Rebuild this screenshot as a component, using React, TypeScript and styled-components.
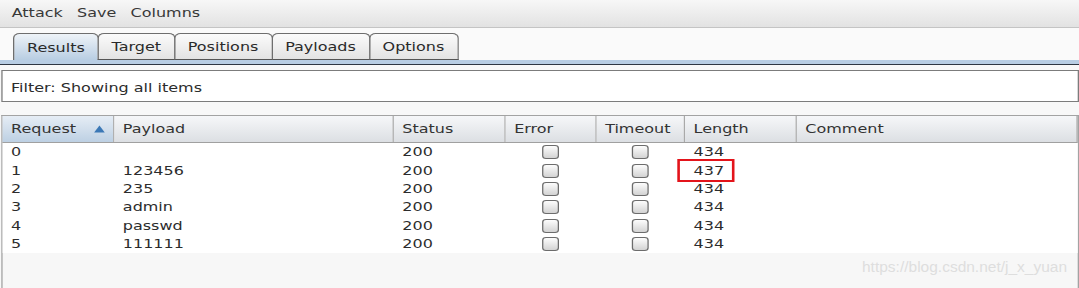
import React from "react";
import styled, { createGlobalStyle } from "styled-components";

/* The reference capture is horizontally stretched by ~1.3; the UI is laid out
   at its native width and the frame is scaled horizontally. */
const SCALE = 1.3;
const BASE_W = 1079 / SCALE;
const COLS = "86px 215px 86px 70px 68px 86px 1fr";

const GlobalStyle = createGlobalStyle`
  html, body { margin: 0; padding: 0; background: #f8f8f8; }
  body { font-family: "DejaVu Sans", "Liberation Sans", sans-serif; }
  * { box-sizing: border-box; }
`;

const Viewport = styled.div`
  position: relative;
  width: 1079px;
  height: 288px;
  overflow: hidden;
  background: #f8f8f8;
`;

const Frame = styled.div`
  width: ${BASE_W}px;
  height: 288px;
  display: flex;
  flex-direction: column;
  transform: scaleX(${SCALE});
  transform-origin: 0 0;
  font-size: 12.3px;
  color: #2c2c2c;
`;

const MenuBar = styled.div`
  flex: none;
  height: 28px;
  display: flex;
  align-items: center;
  gap: 11px;
  padding: 0 9px 1px;
  background: linear-gradient(#f7f7f7, #e2e2e2);
  border-bottom: 1px solid #c4c4c4;
  color: #383838;
`;

const TabStrip = styled.div`
  flex: none;
  height: 32px;
  display: flex;
  align-items: flex-end;
  padding: 5px 0 0 10px;
  background: #fafafa;
`;

const Tab = styled.div<{ $active?: boolean }>`
  height: 27px;
  padding: 1px 9.8px 0;
  margin-left: -1px;
  display: flex;
  align-items: center;
  justify-content: center;
  border: 1px solid #6e6e6e;
  border-bottom: ${(p) => (p.$active ? "none" : "1px solid #555")};
  border-radius: 5px 5px 0 0;
  background: ${(p) =>
    p.$active
      ? "linear-gradient(#eef3f8, #b8cde2)"
      : "linear-gradient(#fbfbfb, #e3e3e3)"};
  color: #2a2a2a;
  &:first-child {
    margin-left: 0;
  }
`;

const TabRule = styled.div`
  flex: none;
  height: 5px;
  background: #b8cde3;
  border-bottom: 1.5px solid #2e3642;
`;

const FilterBox = styled.div`
  flex: none;
  height: 32px;
  margin: 5px 0.5px 0;
  padding: 3px 7px 0;
  display: flex;
  align-items: center;
  background: #fff;
  border: 1px solid #7c7c7c;
`;

const Table = styled.div`
  flex: 1;
  margin: 13px 0.5px 0;
  display: flex;
  flex-direction: column;
  background: #f7f7f7;
  border: 1px solid #a3a3a3;
  border-bottom: none;
`;

const HeaderRow = styled.div`
  flex: none;
  height: 27px;
  display: grid;
  grid-template-columns: ${COLS};
  border-bottom: 1px solid #a0a0a0;
`;

const HeaderCell = styled.div<{ $active?: boolean }>`
  display: flex;
  align-items: center;
  justify-content: space-between;
  padding: 0 6px 1px 7px;
  border-right: 1px solid #a9a9a9;
  background: ${(p) =>
    p.$active
      ? "linear-gradient(#e6edf5, #bdd0e3)"
      : "linear-gradient(#f6f7f9, #dcdfe3)"};
  color: #333;
`;

const Row = styled.div`
  flex: none;
  height: 18.4px;
  display: grid;
  grid-template-columns: ${COLS};
  background: #fff;
`;

const Cell = styled.div<{ $center?: boolean }>`
  position: relative;
  display: flex;
  align-items: center;
  justify-content: ${(p) => (p.$center ? "center" : "flex-start")};
  padding: 0 7px;
  white-space: nowrap;
`;

const Check = styled.span`
  display: block;
  width: 13px;
  height: 14px;
  border: 1px solid #6c6c6c;
  border-radius: 3px;
  background: linear-gradient(#fdfdfd, #d3d3d3);
`;

const Highlight = styled.span`
  position: absolute;
  left: -5.5px;
  top: -2.5px;
  width: 44px;
  height: 23px;
  border: 2px solid #e3141b;
`;

const Watermark = styled.div`
  position: absolute;
  left: 862px;
  top: 259px;
  font-family: "Liberation Sans", Arial, sans-serif;
  font-size: 15.5px;
  line-height: 1;
  color: #dedede;
  white-space: nowrap;
`;

const SortArrow = () => (
  <svg width="9" height="8" viewBox="0 0 9 8">
    <path d="M4.5 0.5 L8.6 7.6 L0.4 7.6 Z" fill="#3b78b6" />
  </svg>
);

const rows = [
  { id: "0", payload: "", status: "200", length: "434" },
  { id: "1", payload: "123456", status: "200", length: "437", mark: true },
  { id: "2", payload: "235", status: "200", length: "434" },
  { id: "3", payload: "admin", status: "200", length: "434" },
  { id: "4", payload: "passwd", status: "200", length: "434" },
  { id: "5", payload: "111111", status: "200", length: "434" },
];

export default function App() {
  return (
    <>
      <GlobalStyle />
      <Viewport>
        <Frame>
          <MenuBar>
            <span>Attack</span>
            <span>Save</span>
            <span>Columns</span>
          </MenuBar>
          <TabStrip>
            <Tab $active>Results</Tab>
            <Tab>Target</Tab>
            <Tab>Positions</Tab>
            <Tab>Payloads</Tab>
            <Tab>Options</Tab>
          </TabStrip>
          <TabRule />
          <FilterBox>Filter: Showing all items</FilterBox>
          <Table>
            <HeaderRow>
              <HeaderCell $active>
                <span>Request</span>
                <SortArrow />
              </HeaderCell>
              <HeaderCell>Payload</HeaderCell>
              <HeaderCell>Status</HeaderCell>
              <HeaderCell>Error</HeaderCell>
              <HeaderCell>Timeout</HeaderCell>
              <HeaderCell>Length</HeaderCell>
              <HeaderCell>Comment</HeaderCell>
            </HeaderRow>
            {rows.map((r) => (
              <Row key={r.id}>
                <Cell>{r.id}</Cell>
                <Cell>{r.payload}</Cell>
                <Cell>{r.status}</Cell>
                <Cell $center>
                  <Check />
                </Cell>
                <Cell $center>
                  <Check />
                </Cell>
                <Cell>
                  {r.length}
                  {r.mark && <Highlight />}
                </Cell>
                <Cell />
              </Row>
            ))}
          </Table>
        </Frame>
        <Watermark>https://blog.csdn.net/j_x_yuan</Watermark>
      </Viewport>
    </>
  );
}
